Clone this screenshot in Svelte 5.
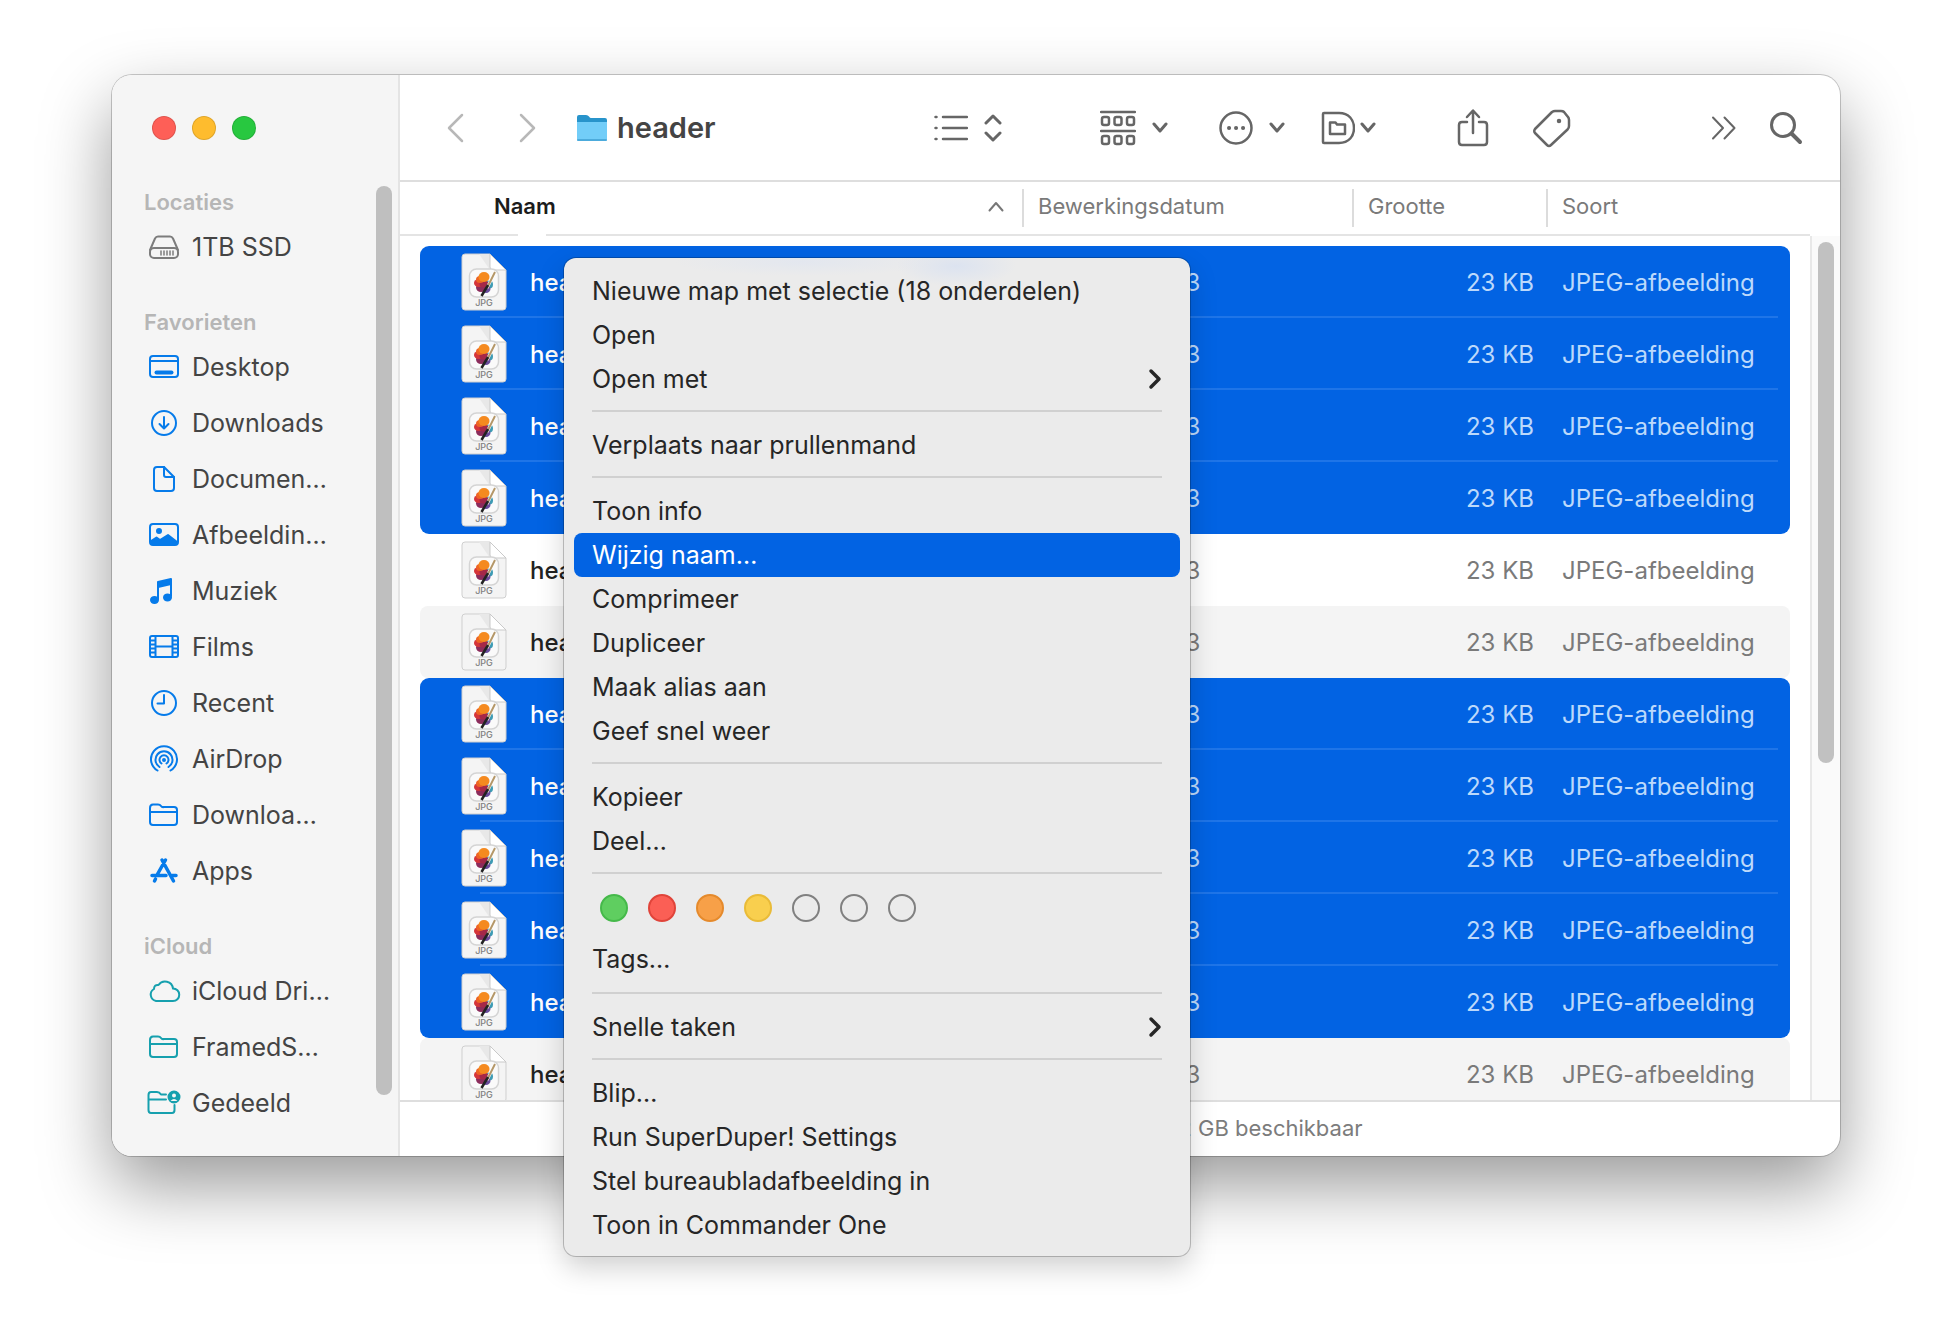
<script>
  const sections = [
    { title: 'Locaties', tone: 'gray', items: [['disk', '1TB SSD']] },
    {
      title: 'Favorieten',
      tone: 'blue',
      items: [
        ['desktop', 'Desktop'],
        ['download', 'Downloads'],
        ['document', 'Documen…'],
        ['picture', 'Afbeeldin…'],
        ['music', 'Muziek'],
        ['film', 'Films'],
        ['clock', 'Recent'],
        ['airdrop', 'AirDrop'],
        ['folder', 'Downloa…'],
        ['apps', 'Apps'],
      ],
    },
    {
      title: 'iCloud',
      tone: 'teal',
      items: [
        ['cloud', 'iCloud Dri…'],
        ['folder', 'FramedS…'],
        ['shared', 'Gedeeld'],
      ],
    },
  ];

  const selection = [1, 1, 1, 1, 0, 0, 1, 1, 1, 1, 1, 0];
  const rows = selection.map((on, i) => ({
    name: `header-${String(i + 1).padStart(2, '0')}.jpg`,
    selected: !!on,
    first: !!on && !selection[i - 1],
    last: !!on && !selection[i + 1],
    striped: !on && i % 2 === 1,
  }));

  const menu = [
    ['Nieuwe map met selectie (18 onderdelen)', 'Open', 'Open met'],
    ['Verplaats naar prullenmand'],
    ['Toon info', 'Wijzig naam…', 'Comprimeer', 'Dupliceer', 'Maak alias aan', 'Geef snel weer'],
    ['Kopieer', 'Deel…'],
    ['Tags…'],
    ['Snelle taken'],
    ['Blip…', 'Run SuperDuper! Settings', 'Stel bureaubladafbeelding in', 'Toon in Commander One'],
  ];
  const submenus = ['Open met', 'Snelle taken'];
  const tags = ['green', 'red', 'orange', 'yellow', 'none', 'none', 'none'];
</script>

{#snippet chevron()}
  <svg class="chev" width="16" height="12" viewBox="0 0 16 12"><path d="M2 2l6 7 6-7" stroke-width="3" /></svg>
{/snippet}

{#snippet sideIcon(kind)}
  <svg class="side-icon" width="36" height="32" viewBox="0 0 36 32" aria-hidden="true">
    {#if kind === 'disk'}
      <path d="M4 19L9 7.500Q10 5.500 12 5.500H24Q26 5.500 27 7.500L32 19" />
      <rect x="4" y="17" width="28" height="10" rx="4" />
      <path d="M15 20v4M18 20v4M21 20v4M24 20v4M27 20v4" stroke-width="1.500" />
    {:else if kind === 'desktop'}
      <rect x="4" y="5" width="28" height="21" rx="3" />
      <path d="M4 10H32" /><path d="M10.500 21.500H25.500" stroke-width="4" />
    {:else if kind === 'download'}
      <circle cx="18" cy="16" r="12" /><path d="M18 10v11M13.500 17l4.500 4.500 4.500-4.500" />
    {:else if kind === 'document'}
      <path d="M8 7Q8 4 11 4H18L28 14V25Q28 28 25 28H11Q8 28 8 25Z" /><path d="M18 4V12Q18 14 20 14H28" />
    {:else if kind === 'picture'}
      <rect x="4" y="5" width="28" height="21" rx="3" /><circle cx="13" cy="12" r="2" class="solid" />
      <path class="solid" d="M5 22L10.500 18.500 14 21 22 16 31 23V25H5Z" />
    {:else if kind === 'music'}
      <path class="solid" d="M12 7L25 4V9L12 12Z" /><path d="M12 8V24M25 5V21" />
      <ellipse class="solid" cx="8.500" cy="25" rx="3.500" ry="3" /><ellipse class="solid" cx="21.500" cy="22.500" rx="3.500" ry="3" />
    {:else if kind === 'film'}
      <rect x="4" y="5" width="28" height="21" rx="2" />
      <path d="M9.500 5V26M26.500 5V26M9.500 15.500H26.500M4 9.500H9M4 13.500H9M4 17.500H9M4 21.500H9M27 9.500H32M27 13.500H32M27 17.500H32M27 21.500H32" />
    {:else if kind === 'clock'}
      <circle cx="18" cy="16" r="12" /><path d="M18 8V16.500H11.500" />
    {:else if kind === 'airdrop'}
      <circle class="solid" cx="18" cy="17" r="1" />
      <path d="M15.500 20.500A4.500 4.500 0 1 1 20.500 20.500M13.500 24A8.500 8.500 0 1 1 22.500 24M11.500 27.500A13 13 0 1 1 24.500 27.500" />
    {:else if kind === 'folder'}
      <path d="M4 9Q4 5.500 7 5.500H12Q14 5.500 15 7T18 8H28Q31 8 31 11V23Q31 26 28 26H7Q4 26 4 23ZM4 13H31" />
    {:else if kind === 'apps'}
      <path d="M19.500 5L11 20M16 5L27.500 26M6 20.500H20M26 20.500H30M9.500 24L8.500 26" stroke-width="3.500" />
    {:else if kind === 'cloud'}
      <path d="M10 26A6.500 6.500 0 0 1 8 14Q8 9.500 12.500 10A8 8 0 0 1 27 13.500A6 6 0 0 1 27 26Z" />
    {:else}
      <path d="M20 7.500H15Q13.500 5 11 5H5Q2.500 5 2.500 8V23Q2.500 26 5 26H26Q28.500 26 28.500 23V18M2.500 12.500H20" />
      <circle class="solid" cx="28" cy="10" r="5.500" />
      <path class="cut" d="M28 6.500a2 2 0 1 1 0 4a2 2 0 1 1 0-4M24.500 14Q28 10 31.500 14Z" />
    {/if}
  </svg>
{/snippet}

{#snippet fileIcon()}
  <svg class="file" width="46" height="60" viewBox="0 0 46 60" aria-hidden="true">
    <path d="M1 5Q1 2 4 2H29L45 18V55Q45 58 42 58H4Q1 58 1 55Z" fill="#f4f4f4" stroke="#cfcfcf" stroke-width="1" />
    <path d="M18 2H29V18Z" fill="#e8e8e8" stroke="none" />
    <path d="M29 2L45 18H32Q29 18 29 15Z" fill="#fff" stroke="#c9c9c9" stroke-width="1" />
    <rect x="8.500" y="17" width="29" height="28" rx="7" fill="#fafafa" stroke="#d4d4d4" stroke-width="1.500" />
    <g stroke="none">
      <ellipse cx="28.500" cy="32.500" rx="3.500" ry="4" fill="#3d9bb4" />
      <ellipse cx="25" cy="37" rx="4.500" ry="4" fill="#6a4c9c" />
      <ellipse cx="20" cy="35.500" rx="5" ry="4.500" fill="#8c2c5c" />
      <ellipse cx="17.500" cy="31" rx="4.500" ry="4" fill="#d5353a" />
      <ellipse cx="23" cy="32" rx="4.500" ry="3.500" fill="#a52848" />
      <ellipse cx="19" cy="27.500" rx="4" ry="3.500" fill="#ee6425" />
      <ellipse cx="23" cy="25" rx="5.500" ry="5" fill="#f58a1f" />
    </g>
    <path d="M34 20L26 36" stroke="#fff" stroke-width="3" />
    <path d="M34 20L26 36" stroke="#b49768" stroke-width="2" />
    <path d="M27 33L20.500 44" stroke="#222" stroke-width="2.500" />
    <text x="23" y="54" text-anchor="middle">JPG</text>
  </svg>
{/snippet}

<main class="page">
  <div class="window">
    <aside class="sidebar">
      <nav>
        <div class="lights">
          <button class="light close" aria-label="Sluit"></button>
          <button class="light minimise" aria-label="Minimaliseer"></button>
          <button class="light zoom" aria-label="Vergroot"></button>
        </div>
        {#each sections as section}
          <h2>{section.title}</h2>
          {#each section.items as [kind, label]}
            <button class="place {section.tone}">{@render sideIcon(kind)}<span>{label}</span></button>
          {/each}
        {/each}
      </nav>
      <div class="side-thumb"></div>
    </aside>

    <section class="content">
      <header class="toolbar">
        <div class="nav">
          <button aria-label="Vorige"><svg class="faint" width="18" height="30" viewBox="0 0 18 30"><path d="M16 2L3 15 16 28" /></svg></button>
          <button aria-label="Volgende"><svg class="faint" width="18" height="30" viewBox="0 0 18 30"><path d="M2 2L15 15 2 28" /></svg></button>
        </div>
        <h1>
          <svg width="30" height="28" viewBox="0 0 30 28">
            <path d="M0 3Q0 1 2 1H9Q11 1 12 2.500T14 4H28Q30 4 30 6V12H0Z" fill="#2894cb" stroke="none" />
            <path d="M0 8H30V25Q30 27 28 27H2Q0 27 0 25Z" fill="#72cdf8" stroke="none" />
            <path d="M1 26H29" stroke="#4cabdc" stroke-width="2" />
          </svg>
          header
        </h1>
        <button class="tool" aria-label="Weergave">
          <svg width="34" height="28" viewBox="0 0 34 28"><path d="M9 3H33M9 14H33M9 25H33M1.500 3H2.500M1.500 14H2.500M1.500 25H2.500" /></svg>
          <svg class="updown" width="18" height="30" viewBox="0 0 18 30"><path d="M2 10L9 3l7 7M2 20l7 7 7-7" stroke-width="3" /></svg>
        </button>
        <button class="tool" aria-label="Groepeer">
          <svg width="36" height="36" viewBox="0 0 36 36">
            <path d="M1 2H35M1 21H35" />
            <g>
              <rect x="2" y="7" width="7" height="8" rx="2" /><rect x="14.500" y="7" width="7" height="8" rx="2" /><rect x="27" y="7" width="7" height="8" rx="2" />
              <rect x="2" y="26" width="7" height="8" rx="2" /><rect x="14.500" y="26" width="7" height="8" rx="2" /><rect x="27" y="26" width="7" height="8" rx="2" />
            </g>
          </svg>
          {@render chevron()}
        </button>
        <button class="tool" aria-label="Taken">
          <svg width="34" height="34" viewBox="0 0 34 34"><circle cx="17" cy="17" r="15.500" /><path d="M10 17h.1M17 17h.1M24 17h.1" stroke-width="4" /></svg>
          {@render chevron()}
        </button>
        <button class="tool tight" aria-label="Map">
          <svg width="34" height="34" viewBox="0 0 34 34">
            <path d="M3 2H18C28 2 33 9 33 17S28 32 18 32H3Q2 32 2 31V3Q2 2 3 2Z" />
            <path d="M9 11.500H14.500L16 13.500H24V23H9Z" />
          </svg>
          {@render chevron()}
        </button>
        <button class="tool" aria-label="Deel">
          <svg width="32" height="40" viewBox="0 0 32 40"><path d="M10 14H5Q2 14 2 17V34Q2 37 5 37H27Q30 37 30 34V17Q30 14 27 14H22M16 25V3M10 9l6-6.500L22 9" /></svg>
        </button>
        <button class="tool" aria-label="Tags">
          <svg width="40" height="40" viewBox="0 0 40 40">
            <path d="M20 4Q21.500 3 23 3H29Q31 3 32 4L36 9Q37 10 37 12V18Q37 20 35.500 21.500L19 37Q17 39 15 37L3 25Q1.500 23 3 21Z" /><circle class="dot" cx="27" cy="13" r="1" />
          </svg>
        </button>
        <button class="tool" aria-label="Meer">
          <svg width="26" height="24" viewBox="0 0 26 24"><path d="M2 1.500L12 12 2 22.500M13.500 1.500L23.500 12 13.500 22.500" stroke-width="2" /></svg>
        </button>
        <button class="tool" aria-label="Zoek">
          <svg width="34" height="34" viewBox="0 0 34 34"><circle cx="14" cy="14" r="11.500" stroke-width="3" /><path d="M22.500 22.500L31 31" stroke-width="4" /></svg>
        </button>
      </header>

      <div class="list">
        <div class="files">
          <table>
            <colgroup><col class="c-edge" /><col class="c-name" /><col class="c-date" /><col class="c-size" /><col /><col class="c-edge" /></colgroup>
            <thead>
              <tr>
                <th></th>
                <th class="name">
                  <span>Naam<svg width="16" height="11" viewBox="0 0 16 11"><path d="M1.500 9.500L8 2l6.500 7.500" stroke-width="2" /></svg></span>
                </th>
                <th class="ruled">Bewerkingsdatum</th>
                <th class="ruled">Grootte</th>
                <th class="ruled">Soort</th>
                <th></th>
              </tr>
            </thead>
            <tbody>
              {#each rows as row}
                <tr class:selected={row.selected} class:first={row.first} class:last={row.last} class:striped={row.striped}>
                  <td></td>
                  <td class="fill start"><div class="entry">{@render fileIcon()}{row.name}</div></td>
                  <td class="fill">Vandaag 11:33</td>
                  <td class="fill size">23 KB</td>
                  <td class="fill end">JPEG-afbeelding</td>
                  <td></td>
                </tr>
              {/each}
            </tbody>
          </table>
        </div>
        <div class="track"><div class="thumb"></div></div>
      </div>

      <footer>18 van 36 geselecteerd, 40,52 GB beschikbaar</footer>
    </section>
  </div>

  <div class="menu" role="menu">
    {#each menu as group, g}
      {#if g > 0}<hr />{/if}
      {#if group[0] === 'Tags…'}
        <div class="tags">
          {#each tags as tag}<button class="tag {tag}" aria-label="Tag"></button>{/each}
        </div>
      {/if}
      {#each group as item}
        <button class="item" class:active={item === 'Wijzig naam…'} class:after-tags={item === 'Tags…'} role="menuitem">
          {item}
          {#if submenus.includes(item)}
            <svg width="14" height="22" viewBox="0 0 14 22"><path d="M3 3l8 8-8 8" /></svg>
          {/if}
        </button>
      {/each}
    {/each}
  </div>
</main>

<style>
  :global(body) { margin: 0; background: #fff; }
  .page {
    position: relative;
    box-sizing: border-box;
    min-height: 100vh;
    padding: 75px 112px 100px;
    overflow: hidden;
    font-family: Inter, 'Liberation Sans', sans-serif;
    font-size: 25px;
    color: #262626;
  }
  button { border: 0; padding: 0; margin: 0; background: none; font: inherit; color: inherit; text-align: left; }
  svg { flex: none; fill: none; stroke: currentColor; stroke-width: 2.5; stroke-linecap: round; stroke-linejoin: round; }

  .window {
    display: grid;
    grid-template-columns: 288px minmax(0, 1fr);
    border-radius: 20px;
    overflow: hidden;
    background: #fff;
    box-shadow: 0 0 0 1px rgba(0, 0, 0, 0.2), 0 30px 70px rgba(0, 0, 0, 0.4);
  }

  .sidebar { display: flex; box-sizing: border-box; background: #f5f5f5; border-right: 2px solid #e4e4e4; padding-right: 6px; }
  nav { flex: 1; min-width: 0; padding-bottom: 25px; }
  .side-thumb { width: 16px; margin: 111px 0 61px; border-radius: 8px; background: #bfbfbf; }
  .lights { display: flex; gap: 16px; height: 80px; padding: 41px 0 0 40px; box-sizing: border-box; }
  .light { width: 24px; height: 24px; border-radius: 50%; border: 1px solid rgba(0, 0, 0, 0.12); }
  .close { background: #fe5f57; }
  .minimise { background: #febc2e; }
  .zoom { background: #28c840; }
  h2 { margin: 0; padding: 30px 0 0 32px; font-size: 22px; line-height: 34px; font-weight: 600; color: #b6b6b6; }
  .place { display: flex; align-items: center; gap: 10px; width: 100%; height: 56px; padding-left: 34px; color: #444; white-space: nowrap; }
  .side-icon { stroke-width: 2; }
  .side-icon .solid, .dot { fill: currentColor; }
  .side-icon .cut { fill: #f5f5f5; stroke: none; }
  .gray .side-icon { color: #7c7c7c; }
  .blue .side-icon { color: #067bea; }
  .teal .side-icon { color: #16a0ae; }

  .content { display: flex; flex-direction: column; min-width: 0; }
  .toolbar {
    display: grid;
    grid-template-columns: 177px minmax(0, 1fr) 166px 119px 102px 136px 75px 179px 58px 71px;
    align-items: center;
    height: 107px;
    box-sizing: border-box;
    border-bottom: 2px solid #dedede;
    color: #666;
  }
  .nav { display: flex; gap: 55px; padding-left: 46px; }
  .nav button, .tool { display: flex; align-items: center; }
  .faint { color: #b8b8b8; }
  h1 { display: flex; align-items: center; gap: 10px; margin: 0; font-size: 29px; font-weight: 600; color: #444; }
  .tool { gap: 16px; }
  .tool.tight { gap: 5px; }

  .list { display: flex; flex: 1 1 0; min-height: 0; overflow: hidden; }
  .files { flex: 1; min-width: 0; }
  table { width: 100%; table-layout: fixed; border-collapse: separate; border-spacing: 0; font-size: 24px; color: #7a7a7a; }
  .c-edge { width: 20px; }
  .c-name { width: 602px; }
  .c-date { width: 330px; }
  .c-size { width: 194px; }
  th { height: 54px; padding: 0 0 4px; font-size: 22px; font-weight: 400; text-align: left; border-bottom: 2px solid #e4e4e4; box-sizing: border-box; }
  th.name { position: relative; padding: 0 18px 4px 74px; font-weight: 600; color: #1c1c1c; }
  th.name::after { content: ''; position: absolute; left: 98px; bottom: -2px; width: 28px; height: 2px; background: #fff; }
  th.name span { display: flex; align-items: center; justify-content: space-between; }
  th.name svg { color: #777; }
  th.ruled { padding-left: 16px; background: linear-gradient(#dcdcdc, #dcdcdc) 0 50% / 2px 38px no-repeat; }
  tbody::before { content: ''; display: block; height: 10px; }
  td { height: 72px; padding: 0; box-sizing: border-box; white-space: nowrap; overflow: hidden; }
  td.fill { padding-left: 16px; }
  td.start { padding-left: 41px; }
  td.size { padding-right: 12px; text-align: right; }
  .entry { display: flex; align-items: center; gap: 23px; font-weight: 500; color: #222; }
  .file { stroke-linecap: butt; }
  .file text { fill: #808080; stroke: none; font-size: 9px; font-weight: 500; }
  .striped .fill { background: #f4f4f4; }
  .striped .start { border-radius: 8px 0 0 8px; }
  .striped .end { border-radius: 0 8px 8px 0; }
  .selected .fill { background: #0263e3 linear-gradient(#1f75e8, #1f75e8) 0 100% / 100% 2px no-repeat; color: #bcd9fb; }
  .selected .start { background-size: calc(100% - 60px) 2px; background-position: 100% 100%; }
  .selected .end { background-size: calc(100% - 12px) 2px; }
  .last .fill { background-image: none; }
  .selected .entry { color: #fff; }
  .first .start { border-top-left-radius: 9px; }
  .first .end { border-top-right-radius: 9px; }
  .last .start { border-bottom-left-radius: 9px; }
  .last .end { border-bottom-right-radius: 9px; }

  .track { flex: none; width: 30px; margin-top: 54px; padding: 6px 6px 0; box-sizing: border-box; background: #fafafa; border-left: 2px solid #e8e8e8; }
  .thumb { width: 16px; height: 521px; border-radius: 8px; background: #c1c1c1; }
  footer { height: 56px; box-sizing: border-box; border-top: 2px solid #dedede; font-size: 22px; line-height: 52px; text-align: center; color: #7c7c7c; white-space: nowrap; }

  .menu {
    position: absolute;
    left: 564px;
    top: 258px;
    display: flex;
    flex-direction: column;
    width: 626px;
    box-sizing: border-box;
    padding: 11px 10px 9px;
    border-radius: 12px;
    background:
      radial-gradient(ellipse 60px 20px at 392px 8px, #dce3f0, transparent),
      radial-gradient(ellipse 130px 14px at 240px 4px, #e3e7ef, transparent),
      #ebebeb;
    box-shadow: 0 0 0 1px rgba(0, 0, 0, 0.22), 0 12px 28px rgba(0, 0, 0, 0.18);
  }
  .item { display: flex; align-items: center; justify-content: space-between; width: 100%; height: 44px; padding: 0 18px; border-radius: 8px; white-space: nowrap; }
  .item svg { stroke-width: 3.500; }
  .item.active { background: #0263e3; color: #fff; }
  .after-tags { margin-bottom: 2px; }
  hr { height: 2px; margin: 9px 18px 11px; border: 0; background: #d0d0d0; }
  .tags { display: flex; gap: 20px; height: 52px; padding: 9px 26px 0; box-sizing: border-box; }
  .tag { width: 28px; height: 28px; border-radius: 50%; border: 2px solid #808080; }
  .green { background: #5fce60; border-color: #45b94a; }
  .red { background: #fb5f55; border-color: #e0443a; }
  .orange { background: #f7a048; border-color: #e58a2c; }
  .yellow { background: #f9cf4e; border-color: #e9bb38; }
</style>
